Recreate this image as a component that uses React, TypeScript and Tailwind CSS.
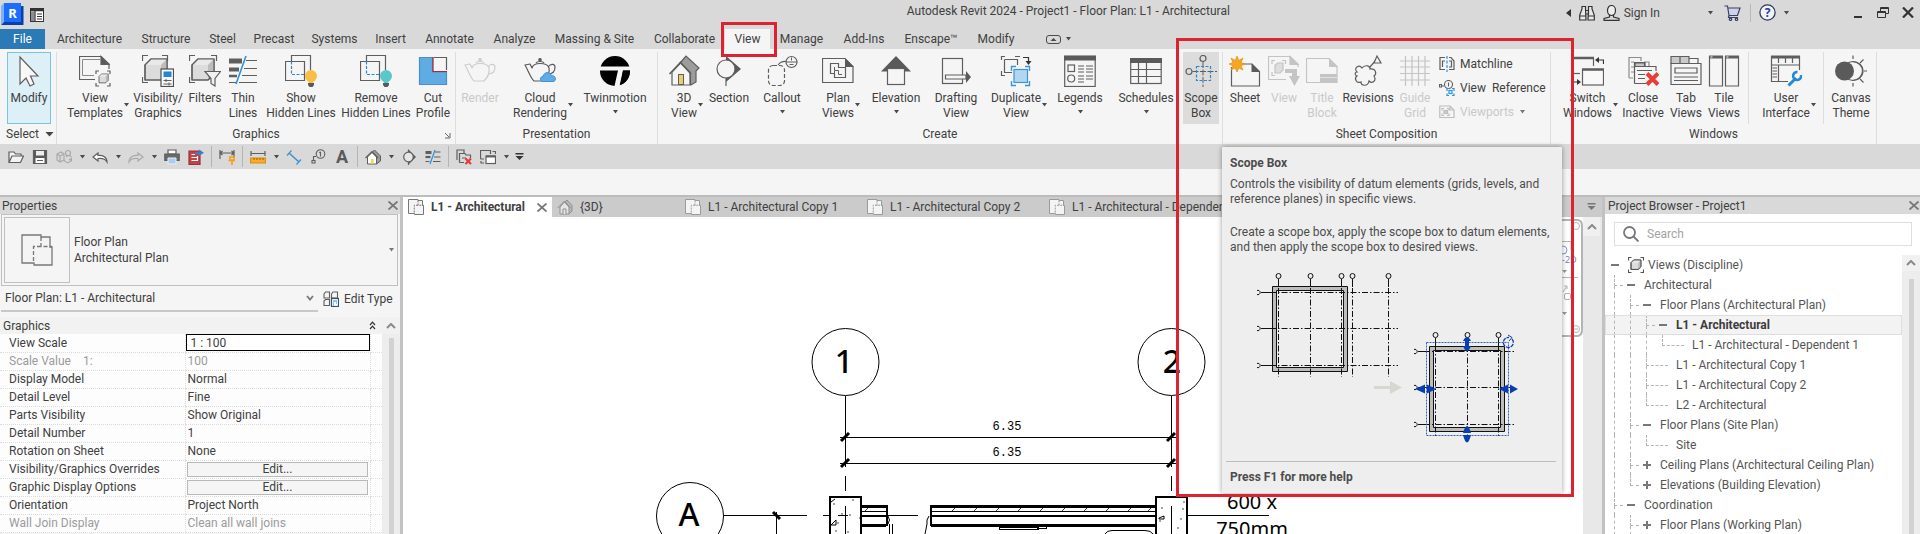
import React from 'react';

type Kids = { children: React.ReactNode };

const INK = '#5e5e5e';

function Ico({ s = 32, children }: Kids & { s?: number }) {
  return (
    <svg width={s} height={s} viewBox={`0 0 ${s} ${s}`} fill="none" stroke={INK} strokeWidth="1.2" className="shrink-0" aria-hidden="true">
      {children}
    </svg>
  );
}

/* ---------- shared fragments ---------- */

const Cube = ({ x = 0, y = 0, k = 1 }: { x?: number; y?: number; k?: number }) => (
  <g transform={`translate(${x} ${y}) scale(${k})`} strokeLinejoin="round">
    <path d="M0 6 L6 0 H22 V15 L16 21 H0 Z" fill="#dcdcdc" />
    <path d="M0 6 L6 0 H22 L16 6 Z" fill="#e9e9e9" stroke="none" />
    <path d="M22 0 V15 L16 21 V6 Z" fill="#bdbdbd" stroke="none" />
    <path d="M0 6 L6 0 H22 V15 L16 21 H0 Z" />
  </g>
);

const Bulb = ({ c }: { c: string }) => (
  <g stroke="none">
    <circle cx="26" cy="21" r="6" fill={c} />
    <path d="M23 25 H29 L28 28 H24 Z" fill={c} />
    <path d="M23 28 H29 V30 L27.500 32 H24.500 L23 30 Z" fill="#5a5a5a" />
  </g>
);

const HiddenLines = ({ c }: { c: string }) => (
  <Ico>
    <path d="M6.500 6.500 V0.500 H25.500 V15" />
    <path d="M6 6.500 H19.500 V25.500 H0.500 V6.500 H6" />
    <path d="M6.500 6.500 V19.500 H19.500" stroke="#2f86c8" strokeDasharray="3 1.500" />
    <Bulb c={c} />
  </Ico>
);

const Pot = ({ c }: { c: string }) => (
  <g stroke={c}>
    <path d="M1 10 L6 9 L8 13 C9 9 12 8.500 16 8.500 C20 8.500 24 9 25 13 C26 18 23 23 20 26 H10 C7 24 4 15 1 10 Z" strokeLinejoin="round" />
    <path d="M24 12 C27 8 31 9 31 12 C31 17 28 19 24 19" />
    <path d="M12 8 C13 6 19 6 20 8" />
    <circle cx="16" cy="4.800" r="1.200" fill={c} />
  </g>
);

/* ---------- ribbon icons ---------- */

const icons: Record<string, React.ReactNode> = {
  modify: (
    <Ico>
      <path d="M7 2 V29 L13 23 L17 31 L21 29 L17.500 21 H25 Z" fill="#f8f8f8" />
    </Ico>
  ),
  viewTemplates: (
    <Ico>
      <path d="M16 24.500 H0.500 V1.500 H22 L30 9 V14" />
      <path d="M15 20.500 H3.500 V4.500 H21" stroke="#8a8a8a" strokeWidth="1" />
      <path d="M22 1.500 L30 9.500 H22 Z" fill="#5a5a5a" />
      <path d="M17 19 V16 H20 M28 16 H31 V19 M31 28 V31 H28 M20 31 H17 V28" />
      <Cube x={20} y={19} k={0.42} />
    </Ico>
  ),
  visibility: (
    <Ico>
      <path d="M0.500 6 V0.500 H6 M20 0.500 H25.500 V6 M0.500 22 V27.500 H6" />
      <Cube x={3} y={4} />
      <rect x="19" y="14" width="12.500" height="17.500" fill="#f8f8f8" stroke="#4f4f4f" />
      <rect x="21.500" y="16.500" width="8" height="5.500" fill="#1f86d8" stroke="none" />
      <path d="M21.500 25.500 H29.500 M21.500 29 H29.500 M24 24 V27 M27 27.500 V30.500" strokeWidth="1" />
    </Ico>
  ),
  filters: (
    <Ico>
      <path d="M0.500 6 V0.500 H6 M22 0.500 H27.500 V6 M0.500 22 V27.500 H6" />
      <Cube x={3} y={4} />
      <path d="M16 16.500 H31.500 L26 23.500 V31 L22 28.500 V23.500 Z" fill="#f1f1f1" />
    </Ico>
  ),
  thinLines: (
    <Ico>
      <path d="M2 6 H15 " strokeWidth="5" />
      <path d="M2 14.500 H12" strokeWidth="4" />
      <path d="M2 21 H10" strokeWidth="2.500" />
      <path d="M2 27.500 H9 M19 5.500 H30 M17 13.500 H30 M15 20.500 H30 M12 27.500 H30" />
      <path d="M19 1 L9 29" stroke="#2f90dd" strokeWidth="1.600" />
    </Ico>
  ),
  showHidden: <HiddenLines c="#f9bf45" />,
  removeHidden: <HiddenLines c="#58c8c8" />,
  cutProfile: (
    <Ico>
      <path d="M2.500 2.500 H15.500 V17 H29.500 V29.500 H2.500 Z" fill="#5fabe3" stroke="#4a90c8" />
      <path d="M17 2.500 H29.500 V15" />
      <path d="M16 2 V16.500 H30" stroke="#b3262c" />
    </Ico>
  ),
  render: (
    <Ico>
      <Pot c="#cdcdcd" />
    </Ico>
  ),
  cloud: (
    <Ico>
      <Pot c="#5a5a5a" />
      <path d="M19 26.500 C15.500 26.500 15.500 21.500 19 21.500 C20 16.500 26 16.500 27.500 20.500 C32.500 20.500 32.500 26.500 29 26.500 Z" fill="#5fabe3" stroke="#3f93d3" strokeWidth="1" />
    </Ico>
  ),
  twinmotion: (
    <Ico>
      <circle cx="16" cy="16" r="15" fill="#000" stroke="none" />
      <path d="M0 11.500 H32 V15.500 H24 L20.500 31 H15.500 L19 15.500 H0 Z" fill="#f5f5f5" stroke="none" />
      <path d="M24 15.500 H31 C31 22 27.500 28 21.500 30 Z" fill="#000" stroke="none" />
    </Ico>
  ),
  view3d: (
    <Ico>
      <path d="M12 8 L18 1 L31 13 L28 16 V27 L23 30 Z" fill="#9c9c9c" />
      <path d="M22 17 V30 H4 V17 L12.500 8 Z" fill="#f5f5f5" />
      <path d="M1.500 19 L12.500 7.500 L23 19" strokeWidth="1.600" />
      <rect x="10.500" y="19.500" width="5" height="10" fill="#e9cf6c" strokeWidth="1" />
      <path d="M22.500 18 V30" />
    </Ico>
  ),
  section: (
    <Ico>
      <path d="M13 1 L28 14 L13 27 Z" fill="#5a5a5a" stroke="none" />
      <path d="M13 22 V31" />
      <circle cx="13" cy="14" r="9" fill="#f5f5f5" />
    </Ico>
  ),
  callout: (
    <Ico>
      <rect x="2.500" y="10.500" width="16" height="20" rx="4.500" strokeDasharray="4 2" />
      <path d="M12 10 Q15 6 20 6.500" />
      <circle cx="25.500" cy="7" r="5.500" />
      <path d="M20 7 H31 M25.500 2.500 V5.500 M23.500 9.500 H27.500" strokeWidth="1" />
    </Ico>
  ),
  plan: (
    <Ico>
      <path d="M0.500 3.500 H23 L31 11.500 V27.500 H0.500 Z" />
      <path d="M23 3 L32 12 H23 Z" fill="#5a5a5a" stroke="none" />
      <path d="M8.500 8.500 H16.500 V12.500 H23.500 V22.500 H12.500 V18.500 H8.500 Z" />
      <path d="M12.500 18.500 V15.500 M12.500 12 V15.500 H16.500 V19.500 H20" strokeWidth="1" />
    </Ico>
  ),
  elevation: (
    <Ico>
      <path d="M16 1 L31 16.500 H1 Z" fill="#5a5a5a" stroke="none" />
      <rect x="7.500" y="13.500" width="17" height="16" fill="#f5f5f5" />
    </Ico>
  ),
  drafting: (
    <Ico>
      <rect x="2.500" y="3.500" width="20" height="25" />
      <path d="M5.500 20 H26 V24 H5.500 Z" fill="#f5f5f5" />
      <path d="M26 16 L31 22 L26 28 Z" fill="#5a5a5a" stroke="none" />
    </Ico>
  ),
  duplicate: (
    <Ico>
      <path d="M1.500 5 V1.500 H5 M15 1.500 H20 M1.500 16 V20.500 H5" />
      <path d="M4.500 4.500 H17.500 V10 M12 17.500 H4.500 V4.500" />
      <path d="M23 2.500 H28.500 V7" stroke="#333" />
      <path d="M25.500 6 H31.500 L28.500 10 Z" fill="#333" stroke="none" />
      <path d="M11.500 16 V11.500 H16 M25 11.500 H29.500 V16 M29.500 26 V30.500 H25 M16 30.500 H11.500 V26" stroke="#3d94cf" strokeWidth="1.400" />
      <rect x="14" y="14.500" width="13.500" height="13" fill="#b3d6f0" stroke="#3d94cf" />
    </Ico>
  ),
  legends: (
    <Ico>
      <rect x="0.700" y="1.500" width="30.500" height="30" />
      <rect x="0" y="0.500" width="32" height="5" fill="#5a5a5a" stroke="none" />
      <rect x="4" y="10" width="6.500" height="6.500" />
      <circle cx="7.200" cy="23.500" r="3.500" />
      <path d="M14 11 H20 M22 11 H29 M14 14 H20 M22 14 H29 M14 17 H20 M22 17 H29 M14 21 H20 M22 21 H29 M14 24 H20 M22 24 H29 M14 27 H20" strokeWidth="1" />
    </Ico>
  ),
  schedules: (
    <Ico>
      <rect x="0.700" y="4" width="30.500" height="24.500" />
      <rect x="0" y="3" width="32" height="5" fill="#5a5a5a" stroke="none" />
      <path d="M0.500 14.500 H31 M0.500 21.500 H31 M8.500 8 V28 M16.500 8 V28" />
    </Ico>
  ),
  scope: (
    <Ico>
      <circle cx="18" cy="3.500" r="3" />
      <circle cx="4" cy="16.500" r="3" />
      <path d="M18 7 V32 M7.500 16.500 H32" strokeWidth="1" strokeDasharray="6 1.500" />
      <rect x="11.500" y="11.500" width="14" height="14" stroke="#2f86c8" strokeDasharray="3 1.500" />
    </Ico>
  ),
  sheet: (
    <Ico>
      <path d="M2.500 12 V31 H30.500 V16.500 L23 9 H12" />
      <path d="M22.500 8.500 L31 17 H22.500 Z" fill="#5a5a5a" stroke="none" />
      <path d="M8 1 L9.800 5.500 L14 3 L12 7.500 L16 9 L12 10.800 L14 15 L9.800 13 L8 17 L6.200 13 L2 15 L4 10.800 L0 9 L4 7.500 L2 3 L6.200 5.500 Z" fill="#f5a623" stroke="#e0930f" strokeWidth="0.700" />
    </Ico>
  ),
  placeView: (
    <Ico>
      <g stroke="#c4c4c4">
        <path d="M18 24.500 H0.500 V1.500 H22 L30 9 V12" />
        <path d="M22 1.500 L30 9.500 H22 Z" fill="#c4c4c4" />
        <path d="M4 9 V5.500 H7 M14 5.500 H17.500 V9 M4 17 V20.500 H7" />
        <path d="M7 10 L10 8 H15 V15 L12 18 H7 Z" fill="#dedede" />
        <path d="M17 14 H29 V21 H32 L26.500 31 L21 21 H24 V18 H17 Z" fill="#c4c4c4" stroke="none" />
      </g>
    </Ico>
  ),
  titleBlock: (
    <Ico>
      <g stroke="#c4c4c4">
        <path d="M0.500 3.500 H23 L31 11.500 V27.500 H0.500 Z" />
        <path d="M23 3 L32 12 H23 Z" fill="#c4c4c4" stroke="none" />
        <rect x="14" y="19" width="17" height="8.500" fill="#c4c4c4" stroke="none" />
        <path d="M14 22.500 H31" stroke="#e0e0e0" />
      </g>
    </Ico>
  ),
  revisions: (
    <Ico>
      <path d="M5 17 C1 13 7 9 10 13 C13 9 19 11 18 14 C24 13 25 19 22 21 C25 26 20 29 17 26 C16 32 9 31 9 27 C4 29 2 23 5 21 C2 20 3 17 5 17 Z" />
      <path d="M17 13 L25 4" />
      <path d="M25 1 L29 8 H22 Z" fill="#f5f5f5" />
    </Ico>
  ),
  guideGrid: (
    <Ico>
      <path d="M6.500 1 V31 M13 1 V31 M19.500 1 V31 M26 1 V31 M1 6 H31 M1 12 H31 M1 18.500 H31 M1 25 H31" stroke="#c4c4c4" />
    </Ico>
  ),
  switchWin: (
    <Ico>
      <path d="M0.500 18 V3.500 H21.500 V11" />
      <path d="M0.500 3 H22" strokeWidth="2.500" />
      <path d="M0.500 18.500 H8" />
      <rect x="10.500" y="14.500" width="21" height="15.500" fill="#f8f8f8" />
      <path d="M10 14.500 H32" strokeWidth="2.500" />
      <path d="M31.500 9 V5 H25 M1 22 V27 H6" stroke="#333" />
      <path d="M27 2 V8 L23 5 Z M5 24 V30 L9 27 Z" fill="#333" stroke="none" />
    </Ico>
  ),
  closeInactive: (
    <Ico>
      <path d="M2 23 V2.500 H14 V6 M4 7 H7 M4 12 H7 M4 17 H7 M17 7 H22 V11 M2 23 H6" stroke="#8c8c8c" />
      <path d="M7.500 28.500 V7.500 H18 V11.500 H29 V16 M7.500 28.500 H19" />
      <path d="M8 8 H17.500 V11.500 H8 Z" fill="#c4c4c4" />
      <path d="M10 15.500 H25 M11 19.500 H18 M11 23.500 H18" />
      <path d="M20 18.500 L31 29.500 M31 18.500 L20 29.500" stroke="#ea3b34" strokeWidth="4" />
    </Ico>
  ),
  tabViews: (
    <Ico>
      <path d="M1 29.500 V8.500 H31 V29.500 Z" />
      <path d="M1 1.500 H10 V8.500 H1 Z M10 1.500 H19 V8.500 H10 Z" fill="#c9c9c9" />
      <path d="M19 3.500 H28 V8.500" />
      <path d="M5 13 H27 V18 H5 Z M4 22 H28 M4 25.500 H28" />
    </Ico>
  ),
  tileViews: (
    <Ico>
      <path d="M1.500 1.500 H14.500 V31 H1.500 Z M17.500 1.500 H30.500 V31 H17.500 Z" />
      <path d="M1 2 H15 M17 2 H31" strokeWidth="3" />
      <path d="M2.500 2 H4.500 M18.500 2 H20.500" stroke="#fff" strokeWidth="1" />
    </Ico>
  ),
  userInterface: (
    <Ico>
      <path d="M18 26.500 H1.500 V1.500 H29.500 V15 M1.500 10 H29.500 M8.500 10 V26 M8.500 3 V8 M15.500 3 V8 M22.500 3 V8" />
      <path d="M1 2 H30" strokeWidth="3" />
      <path d="M2.500 13 H7 M2.500 16 H7 M2.500 19 H7 M2.500 22 H7" />
      <path d="M18.500 30.500 L26 23" stroke="#2288dc" strokeWidth="3" />
      <path d="M31 20 A4 4 0 1 1 27.500 17" stroke="#2288dc" strokeWidth="2.600" />
    </Ico>
  ),
  canvasTheme: (
    <Ico>
      <circle cx="18" cy="16" r="9.500" />
      <path d="M17 6.500 A11 9.500 0 0 1 17 25.500" />
      <circle cx="9.500" cy="16" r="9.500" fill="#5a5a5a" stroke="none" />
      <path d="M18 0.500 V4 M18 28 V31.500 M25 8 L28.500 4.500 M25 24 L28.500 27.500 M29 16 H32" />
    </Ico>
  ),
};

/* ---------- ribbon building blocks ---------- */

function Tri({ cls = 'text-[#4a4a4a]' }: { cls?: string }) {
  return (
    <svg width="7" height="4" viewBox="0 0 7 4" className={cls} fill="currentColor" aria-hidden="true">
      <path d="M1 0 H6 L3.500 3.500 Z" />
    </svg>
  );
}

type Tool = { icon: string; w: string; lines: string[]; arrow?: 'side' | 'below'; off?: boolean; cls?: string };

function ToolButton({ icon, w, lines, arrow, off, cls = '' }: Tool) {
  return (
    <button disabled={off} className={`flex shrink-0 flex-col items-center pt-[3px] ${w} ${cls} ${off ? 'text-[#c9c9c9]' : ''}`}>
      {icons[icon]}
      <span className="relative mt-1 block leading-[15px] whitespace-nowrap">
        {lines.map((l) => (
          <span key={l} className="block">{l}</span>
        ))}
        {arrow === 'side' && (
          <span className="absolute top-3 left-full"><Tri /></span>
        )}
      </span>
      {arrow === 'below' && <span className="mt-1"><Tri /></span>}
    </button>
  );
}

function Panel({ title, w, pad, tools, children, launcher }: { title: string; w: string; pad: string; tools: Tool[]; children?: React.ReactNode; launcher?: boolean }) {
  return (
    <section className={`relative flex shrink-0 flex-col border-r border-[#dedede] ${w}`}>
      <div className={`flex h-[72px] ${pad}`}>
        {tools.map((t) => <ToolButton key={t.icon} {...t} />)}
        {children}
      </div>
      <h2 className="text-center leading-5">{title}</h2>
      {launcher && (
        <button aria-label="Graphics options" className="absolute right-1 bottom-[5px]">
          <svg width="7" height="7" viewBox="0 0 7 7" stroke="#666" fill="none"><path d="M1 1 L5 5 M6 1 V6 H1" /></svg>
        </button>
      )}
    </section>
  );
}

const graphics: Tool[] = [
  { icon: 'viewTemplates', w: 'w-[66px]', lines: ['View', 'Templates'], arrow: 'side' },
  { icon: 'visibility', w: 'w-[60px]', lines: ['Visibility/', 'Graphics'] },
  { icon: 'filters', w: 'w-[34px]', lines: ['Filters'] },
  { icon: 'thinLines', w: 'w-[42px]', lines: ['Thin', 'Lines'] },
  { icon: 'showHidden', w: 'w-[74px]', lines: ['Show', 'Hidden Lines'] },
  { icon: 'removeHidden', w: 'w-[76px]', lines: ['Remove', 'Hidden Lines'] },
  { icon: 'cutProfile', w: 'w-[38px]', lines: ['Cut', 'Profile'] },
];
const presentation: Tool[] = [
  { icon: 'render', w: 'w-[48px]', lines: ['Render'], off: true },
  { icon: 'cloud', w: 'w-[72px]', lines: ['Cloud', 'Rendering'], arrow: 'side' },
  { icon: 'twinmotion', w: 'w-[78px]', lines: ['Twinmotion'], arrow: 'below' },
];
const create: Tool[] = [
  { icon: 'view3d', w: 'w-[42px]', lines: ['3D', 'View'], arrow: 'side' },
  { icon: 'section', w: 'w-[48px]', lines: ['Section'] },
  { icon: 'callout', w: 'w-[58px]', lines: ['Callout'], arrow: 'below' },
  { icon: 'plan', w: 'w-[54px]', lines: ['Plan', 'Views'], arrow: 'side' },
  { icon: 'elevation', w: 'w-[62px]', lines: ['Elevation'], arrow: 'below' },
  { icon: 'drafting', w: 'w-[58px]', lines: ['Drafting', 'View'] },
  { icon: 'duplicate', w: 'w-[62px]', lines: ['Duplicate', 'View'], arrow: 'side' },
  { icon: 'legends', w: 'w-[66px]', lines: ['Legends'], arrow: 'below' },
  { icon: 'schedules', w: 'w-[66px]', lines: ['Schedules'], arrow: 'below' },
  { icon: 'scope', w: 'w-[36px]', lines: ['Scope', 'Box'], cls: 'bg-[#dcdcdc] ml-1' },
];
const sheets: Tool[] = [
  { icon: 'sheet', w: 'w-[40px]', lines: ['Sheet'] },
  { icon: 'placeView', w: 'w-[38px]', lines: ['View'], off: true },
  { icon: 'titleBlock', w: 'w-[38px]', lines: ['Title', 'Block'], off: true },
  { icon: 'revisions', w: 'w-[54px]', lines: ['Revisions'] },
  { icon: 'guideGrid', w: 'w-[40px]', lines: ['Guide', 'Grid'], off: true },
];
const windowsTools: Tool[] = [
  { icon: 'switchWin', w: 'w-[61px]', lines: ['Switch', 'Windows'], arrow: 'side' },
  { icon: 'closeInactive', w: 'w-[50px]', lines: ['Close', 'Inactive'] },
  { icon: 'tabViews', w: 'w-[36px]', lines: ['Tab', 'Views'] },
  { icon: 'tileViews', w: 'w-[40px]', lines: ['Tile', 'Views'] },
];

const Sep = () => <span className="mx-1 w-px shrink-0 bg-[#dedede]" />;

/* ---------- title bar ---------- */

function TitleBar() {
  return (
    <header className="flex h-[29px] shrink-0 items-center">
      <div className="flex w-[571px] shrink items-center gap-[5px] pl-px">
        <svg width="24" height="24" viewBox="0 0 24 24" aria-hidden="true">
          <path d="M0 3 L3 0 V19 L0 22 Z" fill="#7fb0ff" />
          <path d="M3 0 H20 V19 H3 Z" fill="#1a6dff" />
          <path d="M20 3 H22.500 V22 H0 L3 19 H20 Z" fill="#0a3fa8" />
          <text x="11.500" y="14.500" textAnchor="middle" fontSize="13" fontWeight="700" fill="#fff" fontFamily="Noto Sans, sans-serif">R</text>
        </svg>
        <svg width="14" height="14" viewBox="0 0 14 14" fill="#fff" stroke="#333" aria-hidden="true">
          <rect x="0.500" y="0.500" width="13" height="13" />
          <path d="M0.500 2 H13.500" strokeWidth="2.500" />
          <rect x="1" y="3.500" width="3.500" height="9.500" fill="#8a8f96" stroke="none" />
          <path d="M5 3 V13 M7 6 H12 M7 8.500 H12 M7 11 H12" strokeWidth="1.200" />
        </svg>
      </div>
      <h1 className="-mt-2 min-w-0 flex-1 text-center whitespace-nowrap">Autodesk Revit 2024 - Project1 - Floor Plan: L1 - Architectural</h1>
      <div className="-mt-1 flex shrink-0 items-center">
        <button aria-label="Collapse search" className="mr-2 text-[#333]">
          <svg width="5" height="8" viewBox="0 0 5 8" fill="currentColor"><path d="M5 0 V8 L0 4 Z" /></svg>
        </button>
        <button aria-label="Find" className="mr-2">
          <svg width="16" height="16" viewBox="0 0 16 16" fill="#e8e8e8" stroke="#333" strokeWidth="1.200">
            <path d="M3 1.500 H6.500 V4 L7 15 H0.700 V10 L3 4 Z M9.500 1.500 H13 V4 L15.300 10 V15 H9 L9.500 4 Z M6.500 5.500 H9.500 V9 H6.500 M0.700 11 H7 M9 11 H15.300" />
          </svg>
        </button>
        <button className="mr-[47px] flex items-center gap-1">
          <svg width="17" height="16" viewBox="0 0 17 16" fill="none" stroke="#333" strokeWidth="1.200">
            <ellipse cx="8.500" cy="5.500" rx="4" ry="5" fill="#eee" />
            <path d="M6.500 10 V12 L1 13.500 V15.300 H16 V13.500 L10.500 12 V10" />
          </svg>
          Sign In
        </button>
        <button aria-label="Account menu" className="mr-[10px]"><Tri /></button>
        <button aria-label="App Store" className="mr-[9px]">
          <svg width="17" height="16" viewBox="0 0 17 16" fill="#cfd3ea" stroke="#3a3f63" strokeWidth="1.200">
            <path d="M0.500 1 H3.500 L5 10.500 H13.500 L16 3 H4 M5 10.500 L4.500 12.500 H14" />
            <circle cx="6.500" cy="14.300" r="1.200" /><circle cx="12.500" cy="14.300" r="1.200" />
          </svg>
        </button>
        <span className="mr-2 h-[18px] w-px bg-[#b8b8b8]" />
        <button aria-label="Help" className="mr-[7px]">
          <svg width="17" height="17" viewBox="0 0 17 17">
            <circle cx="8.500" cy="8.500" r="7.600" fill="#f1f3fa" stroke="#333a55" strokeWidth="1.300" />
            <text x="8.500" y="13" textAnchor="middle" fontSize="12" fontWeight="700" fill="#2a3ba0" fontFamily="Noto Sans, sans-serif">?</text>
          </svg>
        </button>
        <button aria-label="Help menu" className="mr-16"><Tri /></button>
        <button aria-label="Minimize" className="mr-[15px] pt-2"><span className="block h-[2px] w-2 bg-[#333]" /></button>
        <button aria-label="Restore" className="mr-[13px]">
          <svg width="12" height="11" viewBox="0 0 12 11" fill="none" stroke="#333"><path d="M3.500 4 V0.500 H11.500 V6.500 H8.500 M0.500 4.500 H8.500 V10.500 H0.500 Z M3 1.500 H12 M0 5.500 H9" /></svg>
        </button>
        <button aria-label="Close" className="mr-[6px]">
          <svg width="12" height="11" viewBox="0 0 12 11" stroke="#333" strokeWidth="2.200"><path d="M1 0.500 L11 10.500 M11 0.500 L1 10.500" /></svg>
        </button>
      </div>
    </header>
  );
}

const tabs: [string, string][] = [
  ['Architecture', 'w-[85px]'], ['Structure', 'w-[68px]'], ['Steel', 'w-[45px]'], ['Precast', 'w-[58px]'], ['Systems', 'w-[63px]'],
  ['Insert', 'w-[49px]'], ['Annotate', 'w-[69px]'], ['Analyze', 'w-[61px]'], ['Massing & Site', 'w-[99px]'], ['Collaborate', 'w-[81px]'],
  ['View', 'w-[45px]'], ['Manage', 'w-[63px]'], ['Add-Ins', 'w-[62px]'], ['Enscape™', 'w-[72px]'], ['Modify', 'w-[58px]'],
];

function TabRow() {
  return (
    <nav className="flex h-5 shrink-0 items-stretch">
      <button className="mr-[2px] w-[45px] bg-[#2a7ab5] text-white">File</button>
      {tabs.map(([t, w]) => (
        <span key={t} className={`relative flex shrink-0 ${w}`}>
          <button className={`flex-1 whitespace-nowrap ${t === 'View' ? 'bg-[#f5f5f5]' : ''}`}>{t}</button>
          {t === 'View' && <span className="pointer-events-none absolute -top-[7px] -right-[7px] -bottom-2 -left-1 z-30 border-3 border-[#dc2430]" />}
        </span>
      ))}
      <button aria-label="Ribbon display" className="ml-[21px] flex items-center gap-1">
        <svg width="15" height="9" viewBox="0 0 15 9" fill="none" stroke="#4a4a4a"><rect x="0.500" y="0.500" width="14" height="8" rx="2.500" /><path d="M4.500 6 L7.500 3 L10.500 6 Z" fill="#4a4a4a" stroke="none" /></svg>
        <Tri />
      </button>
    </nav>
  );
}

function Ribbon() {
  return (
    <div className="flex h-[95px] shrink-0 overflow-hidden bg-[#f5f5f5] pt-[3px]">
      <section className="flex w-[57px] shrink-0 flex-col border-r border-[#dedede]">
        <button className="ml-[7px] flex h-[72px] w-[44px] flex-col items-center border border-[#7cc4dc] bg-[#ddeff7] pt-[2px]">
          {icons.modify}
          <span className="mt-1 leading-[15px]">Modify</span>
        </button>
        <button className="flex items-center gap-[6px] pl-[6px] leading-5">
          Select
          <svg width="9" height="5" viewBox="0 0 9 5" fill="#444" aria-hidden="true"><path d="M0.500 0 H8.500 L4.500 4.500 Z" /></svg>
        </button>
      </section>
      <Panel title="Graphics" w="w-[399px]" pad="pl-[5px]" tools={graphics} launcher />
      <Panel title="Presentation" w="w-[202px]" pad="pl-0" tools={presentation} />
      <Panel title="Create" w="w-[565px]" pad="pl-[5px]" tools={create} />
      <Panel title="Sheet Composition" w="w-[328px]" pad="pl-[2px]" tools={sheets}>
        <div className="ml-1 flex flex-col items-start whitespace-nowrap">
          <button className="flex h-6 items-center gap-[5px]">
            <Ico s={16}>
              <path d="M6 1.500 H1 V13.500 H6 M3.500 11 V5 H6 M10 1.500 H12 L15 5 V13.500 H10 M10 5 H12.500 V11 H10" />
              <path d="M8 0 V16" stroke="#2f90dd" strokeDasharray="3 1.500" />
            </Ico>
            Matchline
          </button>
          <button className="flex h-6 items-center gap-[5px]">
            <Ico s={16}>
              <circle cx="9.500" cy="4.500" r="4" strokeWidth="1.100" />
              <path d="M9.500 2.500 V6.500 M0.500 4.500 H2.500 V7 H0.500 Z M3 6 H5" strokeWidth="1.100" />
              <path d="M8 11 V8.500 H10 M13 8.500 H15 V11 M15 13.500 V15.500 H13 M10 15.500 H8 V13.500" stroke="#2f90dd" />
              <rect x="10" y="10.500" width="3" height="3" stroke="#2f90dd" />
            </Ico>
            <span className="whitespace-pre">View  Reference</span>
          </button>
          <button disabled className="flex h-6 items-center gap-[5px] text-[#c9c9c9]">
            <Ico s={16}>
              <g stroke="#bdbdbd">
                <path d="M0.800 2 H11 L15 6 V13.500 H0.800 Z M11 2 V6 H15" />
                <path d="M3 6.500 V4.500 H5 M8 4.500 H10 V6.500 M3 9.500 V11.500 H5 M10 9.500 V11.500 H8" />
                <rect x="5" y="6.500" width="3.500" height="3" fill="#cfcfcf" />
              </g>
            </Ico>
            Viewports <Tri cls="text-[#777]" />
          </button>
        </div>
      </Panel>
      <Panel title="Windows" w="w-[326px]" pad="pl-[6px]" tools={windowsTools}>
        <Sep />
        <ToolButton icon="userInterface" w="w-[66px]" lines={['User', 'Interface']} arrow="side" />
        <Sep />
        <ToolButton icon="canvasTheme" w="w-[46px]" lines={['Canvas', 'Theme']} />
      </Panel>
    </div>
  );
}

/* ---------- quick access bar ---------- */

const qat: { id: string; w: string; art: React.ReactNode }[] = [
  { id: 'Open', w: 'w-6', art: <path d="M1 13 V3 H6 L7.500 5 H13 V7 M1 13.500 L4 7 H15.500 L12.500 13.500 Z" fill="#f3f3f3" /> },
  { id: 'Save', w: 'w-6', art: <><path d="M1.500 1.500 H14.500 V14.500 H1.500 Z" fill="#5a5a5a" /><path d="M4 2 H12 V6.500 H4 Z" fill="#eee" stroke="none" /><path d="M3.500 9 H12.500 V14 H3.500 Z" fill="#fff" stroke="none" /><path d="M5 11.500 H11" strokeWidth="1" /></> },
  { id: 'Synchronize', w: 'w-6', art: <g stroke="#a9a9a9"><path d="M1 5 L5 3 L8 5 V11 L4 13 L1 11 Z M1 5 L4 7 V13 M4 7 L8 5" /><circle cx="12" cy="4" r="2.500" /><path d="M8 11 C10 15 15 14 15.500 10 M15.500 8 C14 6 11 6.500 10 8 M13 11 L15.500 9.500 L16 12.500" /></g> },
  { id: 'Synchronize menu', w: 'w-3', art: null },
  { id: 'Undo', w: 'w-6', art: <path d="M6 4 L1 8 L6 12 V9.500 C10 9 13 9.500 15 13 C15 8 11 6 6 6.500 Z" fill="#fff" /> },
  { id: 'Undo menu', w: 'w-3', art: null },
  { id: 'Redo', w: 'w-6', art: <path d="M10 4 L15 8 L10 12 V9.500 C6 9 3 9.500 1 13 C1 8 5 6 10 6.500 Z" stroke="#ababab" /> },
  { id: 'Redo menu', w: 'w-3', art: null },
  { id: 'Print', w: 'w-6', art: <><path d="M4 1 H12 V5 H4 Z" fill="#fff" /><path d="M0.800 5 H15.200 V11.500 H0.800 Z" fill="#6a6a6a" /><path d="M4 9 H12 V15 H4 Z" fill="#a9cdec" stroke="#eee" strokeWidth="1" /></> },
  { id: 'Export PDF', w: 'w-6', art: <><path d="M1 2 H12 V15.500 H1 Z" fill="#c0424a" stroke="#9d3038" /><path d="M3.500 5.500 H7 M3.500 8.500 H9 M3.500 11.500 H9 M9.500 7 V12" stroke="#fff" /><path d="M7 3.500 H11 V0.500 L16 3.800 L11 7 V5 H7 Z" fill="#2f86c8" stroke="none" /></> },
  { id: '|1', w: 'w-[7px]', art: null },
  { id: 'Activate dimensions', w: 'w-6', art: <><path d="M1 1 V10 M15 1 V8 M1 4 H15 M3.500 2 L1 4 L3.500 6 M12.500 2 L15 4 L12.500 6" /><path d="M10 8 H16 M11 8 V11 H15 V8 M9.500 11.500 H16.500 M13 12 V16" stroke="#f0a020" strokeWidth="1.600" /></> },
  { id: '|2', w: 'w-[7px]', art: null },
  { id: 'Measure', w: 'w-6', art: <><path d="M1 2 V7 M15 2 V7 M1 4.500 H15" /><rect x="0.500" y="9" width="15" height="5" fill="#f5ad2a" stroke="#d8900c" strokeWidth="1" /><path d="M4 9 V11 M7 9 V11 M10 9 V11 M13 9 V11" stroke="#7a5200" strokeWidth="0.800" /></> },
  { id: 'Measure menu', w: 'w-3', art: null },
  { id: 'Aligned dimension', w: 'w-6', art: <><path d="M3 4 L13 13" stroke="#3f93d3" strokeWidth="1.600" /><path d="M1 6.500 L5.500 1.500 M10.500 15.500 L15 10.500" stroke="#3f93d3" /></> },
  { id: 'Tag by category', w: 'w-6', art: <><circle cx="10.500" cy="5" r="4.300" strokeWidth="1.100" /><path d="M10.500 2.800 V7.500 M9.300 3.800 L10.500 2.800 M6 7.500 H3.500 V11.500 M2 11.500 H5 V14 H2 Z" strokeWidth="1.100" /></> },
  { id: 'Text', w: 'w-6', art: 'A' },
  { id: '|3', w: 'w-[7px]', art: null },
  { id: '3D view', w: 'w-6', art: <><path d="M6.500 4 L9.500 1 L15.500 7 V12 L11.500 15 Z" fill="#9c9c9c" strokeWidth="1" /><path d="M2.500 8 V15 H11.500 V8 L7 3.500 Z" fill="#fff" strokeWidth="1" /><path d="M0.500 9 L7 2.500 L13 9" /><path d="M6 10 H8.500 V14.500 H6 Z" fill="#f0dc3c" stroke="none" /></> },
  { id: '3D view menu', w: 'w-3', art: null },
  { id: 'Section', w: 'w-6', art: <><path d="M8 1 L15 8 L8 15 Z" fill="#5a5a5a" stroke="none" /><circle cx="7.500" cy="8" r="4.800" fill="#e6e6e6" /><path d="M7.500 0.500 V3 M7.500 13 V16" /></> },
  { id: 'Thin lines', w: 'w-6', art: <><path d="M0.500 3.500 H6.500" strokeWidth="3" /><path d="M0.500 8 H5.500" strokeWidth="2.200" /><path d="M0.500 12.500 H4.500 M10 3 H15.500 M9 8 H15.500 M8 12.500 H15.500" /><path d="M10 1 L5 15" stroke="#2f90dd" /></> },
  { id: '|4', w: 'w-[7px]', art: null },
  { id: 'Close inactive', w: 'w-6', art: <><path d="M1 11 V1 H8 V4 M3.500 13.500 V4.500 H9 L10 6 H14.500 V9 M3.500 13.500 H8 M6 9 H10" /><path d="M9.500 9.500 L15 15 M15 9.500 L9.500 15" stroke="#e23b3b" strokeWidth="2.200" /></> },
  { id: 'Switch windows', w: 'w-6', art: <><path d="M0.500 10 V1.500 H10.500 V5 M0.500 10 H4" /><rect x="6" y="7" width="9.500" height="7.500" fill="#fff" /><path d="M6 7.500 H15.500" strokeWidth="2" /><path d="M12.500 2.500 H15.500 V5 M1 12 V14 H4" /></> },
  { id: 'Switch windows menu', w: 'w-3', art: null },
];

function QuickAccess() {
  return (
    <div className="flex h-[25px] shrink-0 items-center pl-1">
      {qat.map(({ id, w, art }) =>
        id[0] === '|' ? (
          <span key={id} className={`flex h-[21px] justify-center ${w}`}><span className="w-px bg-[#b4b4b4]" /></span>
        ) : (
          <button key={id} aria-label={id} className={`flex items-center justify-center ${w}`}>
            {typeof art === 'string' ? (
              <span className="text-lg leading-5 font-bold text-[#5a5a5a]">{art}</span>
            ) : art ? (
              <Ico s={16}>{art}</Ico>
            ) : (
              <Tri />
            )}
          </button>
        ),
      )}
      <button aria-label="Customize" className="ml-[3px]">
        <svg width="9" height="8" viewBox="0 0 9 8" fill="#333"><path d="M0.500 0 H8.500 V1.500 H0.500 Z M0.500 3 H8.500 L4.500 7 Z" /></svg>
      </button>
    </div>
  );
}

/* ---------- properties palette ---------- */

const CloseX = () => (
  <svg width="10" height="9" viewBox="0 0 10 9" stroke="#777" strokeWidth="1.800" aria-hidden="true"><path d="M0.500 0.500 L9.500 8.500 M9.500 0.500 L0.500 8.500" /></svg>
);

const PlanSheet = ({ s, c = '#777' }: { s: number; c?: string }) => (
  <svg width={s} height={s} viewBox="0 0 32 32" fill="#f4f4f4" stroke={c} strokeWidth={s > 20 ? 1.3 : 2} className="shrink-0" aria-hidden="true">
    <path d="M1 1 H20 V3 H29 V13 H31 V31 H13 V29 H1 Z" />
    <path d="M20 3 V12.500 H31 M20 12.500 H12.500 V29" fill="none" strokeDasharray="4 2" />
  </svg>
);

const props: { k: string; v: string; kind?: 'input' | 'edit' | 'off' }[] = [
  { k: 'View Scale', v: '1 : 100', kind: 'input' },
  { k: 'Scale Value    1:', v: '100', kind: 'off' },
  { k: 'Display Model', v: 'Normal' },
  { k: 'Detail Level', v: 'Fine' },
  { k: 'Parts Visibility', v: 'Show Original' },
  { k: 'Detail Number', v: '1' },
  { k: 'Rotation on Sheet', v: 'None' },
  { k: 'Visibility/Graphics Overrides', v: 'Edit...', kind: 'edit' },
  { k: 'Graphic Display Options', v: 'Edit...', kind: 'edit' },
  { k: 'Orientation', v: 'Project North' },
  { k: 'Wall Join Display', v: 'Clean all wall joins', kind: 'off' },
];

const Up = () => (
  <svg width="10" height="6" viewBox="0 0 10 6" fill="none" stroke="#8a8a8a" strokeWidth="2" aria-hidden="true"><path d="M1 5 L5 1 L9 5" /></svg>
);

function Properties() {
  return (
    <aside className="flex w-[403px] shrink-0 flex-col border-r-3 border-[#c2c2c2] bg-[#f5f5f5]">
      <div className="flex h-[17px] shrink-0 items-center justify-between bg-[#d9d9d9] pr-[2px] pl-[2px]">
        <h2>Properties</h2>
        <button aria-label="Close properties"><CloseX /></button>
      </div>
      <button className="mr-[2px] ml-px flex h-[72px] shrink-0 items-center border border-[#c0c0c0] text-left">
        <span className="ml-[2px] flex size-[66px] items-center justify-center border border-[#c0c0c0]"><PlanSheet s={32} /></span>
        <span className="ml-1 flex-1 leading-4">Floor Plan<br />Architectural Plan</span>
        <Tri cls="text-[#777] mr-[2px]" />
      </button>
      <div className="flex h-[31px] shrink-0 items-start">
        <label className="ml-px flex h-[26px] w-[317px] items-center border-b-2 border-[#c8c8c8] pr-1">
          <select aria-label="View" className="h-full flex-1 appearance-none bg-transparent pl-1">
            <option>Floor Plan: L1 - Architectural</option>
          </select>
          <svg width="8" height="6" viewBox="0 0 8 6" fill="none" stroke="#777" strokeWidth="1.800" aria-hidden="true"><path d="M1 1 L4 4.500 L7 1" /></svg>
        </label>
        <button className="ml-[5px] flex h-[26px] items-center gap-[5px] whitespace-nowrap">
          <Ico s={16}>
            <path d="M1 3 L2.500 1 H6.500 V7 H1 Z M8.500 3 L10 1 H14.500 V7 H8.500 Z M1 10 L2.500 8.500 H6.500 V14.500 H1 Z" strokeWidth="1.100" />
            <rect x="8.500" y="7.500" width="7" height="8" fill="#fff" stroke="#33506f" />
            <path d="M10 10 H14 M10 12 H11 M13 12 H14 M10 14 H11" stroke="#2f86c8" strokeWidth="1" />
          </Ico>
          Edit Type
        </button>
      </div>
      <div className="flex min-h-0 flex-1">
        <div className="min-w-0 flex-1">
          <div className="flex h-[17px] items-center justify-between bg-[#f2f2f2] pr-[6px] pl-[3px]">
            <h3>Graphics</h3>
            <button aria-label="Collapse group">
              <svg width="7" height="9" viewBox="0 0 7 9" fill="none" stroke="#333" strokeWidth="1.200"><path d="M1 4 L3.500 1.200 L6 4 M1 8 L3.500 5.200 L6 8" /></svg>
            </button>
          </div>
          <table className="w-full table-fixed border-collapse bg-[#fdfdfd]">
            <tbody>
              {props.map(({ k, v, kind }, i) => (
                <tr key={k} className={`h-[18px] leading-4 whitespace-pre ${kind === 'off' ? 'text-[#9b9b9b]' : ''}`}>
                  <td className="border-b border-dotted border-[#dcdcdc] p-0 pl-[9px]">
                    <label htmlFor={`prop-${i}`}>{k}</label>
                  </td>
                  <td className="w-[185px] border border-t-0 border-dotted border-[#dcdcdc] p-0">
                    {kind === 'input' ? (
                      <input id={`prop-${i}`} defaultValue={v} className="block h-[17px] w-full border border-black bg-white pl-1" />
                    ) : kind === 'edit' ? (
                      <button id={`prop-${i}`} className="mx-auto block h-[15px] w-[181px] border border-[#b9b9b9] bg-[#f5f5f5] leading-[13px]">{v}</button>
                    ) : (
                      <output id={`prop-${i}`} className="block pl-[2px]">{v}</output>
                    )}
                  </td>
                  <td className="w-3 border-b border-dotted border-[#dcdcdc] p-0" />
                </tr>
              ))}
            </tbody>
          </table>
        </div>
        <div className="flex w-[18px] flex-col items-center bg-[#ededed]">
          <button aria-label="Scroll up" className="flex h-[17px] w-full items-center justify-center bg-[#f1f1f1]"><Up /></button>
          <span className="mt-1 w-[5px] flex-1 bg-[#d2d2d2]" />
        </div>
      </div>
    </aside>
  );
}

/* ---------- drawing area ---------- */

const docTabs: { t: string; w: string; home?: boolean }[] = [
  { t: '{3D}', w: 'w-[128px]', home: true },
  { t: 'L1 - Architectural Copy 1', w: 'w-[182px]' },
  { t: 'L1 - Architectural Copy 2', w: 'w-[182px]' },
  { t: 'L1 - Architectural - Dependent 1', w: 'w-[210px]' },
];

const hatch = [952, 974, 996, 1018, 1040, 1062, 1084, 1106, 1128, 1148];
const specks = [[834, 504], [853, 500], [838, 523], [842, 514], [850, 515], [836, 531], [848, 532], [860, 518], [1162, 508], [1184, 502], [1160, 521], [1178, 528], [1183, 509], [1181, 519]];

function Slash({ x, y }: { x: number; y: number }) {
  return <path d={`M${x - 4} ${y + 4} L${x + 4} ${y - 4}`} strokeWidth="3" />;
}

function Plan() {
  return (
    <svg width="1180" height="317" viewBox="403 217 1180 317" fill="none" stroke="#000" className="shrink-0" role="img" aria-label="Floor plan drawing">
      <circle cx="845.500" cy="362" r="33.500" />
      <circle cx="1171.500" cy="362" r="33.500" />
      <circle cx="690" cy="516" r="33.500" />
      <g fill="#000" stroke="none" fontFamily="Noto Sans, sans-serif" textAnchor="middle">
        <text x="844" y="373" fontSize="32" fontWeight="500">1</text>
        <text x="1172" y="373" fontSize="32" fontWeight="500">2</text>
        <text x="689" y="526" fontSize="32" fontWeight="500">A</text>
        <text x="1252" y="509" fontSize="20">600 x</text>
        <text x="1252" y="536" fontSize="20">750mm</text>
      </g>
      <g fill="#000" stroke="none" fontFamily="Liberation Mono, monospace" fontSize="12" textAnchor="middle">
        <text x="1007" y="430">6.35</text>
        <text x="1007" y="456">6.35</text>
      </g>
      <g shapeRendering="crispEdges">
        <path d="M845.500 396 V467 M1171.500 396 V467 M845.500 476 V491 M1171.500 476 V491 M845.500 506 V534 M1171.500 506 V534" />
        <path d="M840 437.500 H1177 M840 463.500 H1177" />
        <path d="M724 515.500 H807 M823 515.500 H918 M1186 515.500 H1269 M776.500 512 V534" />
        <rect x="830" y="497" width="31" height="50" fill="#fff" strokeWidth="2" />
        <rect x="1156" y="497" width="31" height="50" fill="#fff" strokeWidth="2" />
        <path d="M845.500 506 V534 M1171.500 506 V534 M838 515.500 H848" />
        <path d="M862 506 H886 M862 525 H886 M931 506 H1155 M931 525 H1155" strokeWidth="3" />
        <path d="M862 516 H886 M931 516 H1155" strokeWidth="2" />
        <path d="M862 511.500 H886 M931 511.500 H1155" />
        <path d="M886.500 505 V526 M930.500 505 V526" strokeWidth="2" />
        <path d="M889.500 524 V534 M892.500 524 V534 M999.500 527.500 H1038 V529.500 H999.500 Z M1037 525 H1046 V528 H1037" />
      </g>
      <path d="M888 516 Q891 520 888 524 M929 516 Q926 520 927 524 L925 534 M1105 534 Q1107 530.500 1112 530.500 H1145 Q1151 530.500 1153 534" />
      {hatch.map((x) => <path key={x} d={`M${x} 511 L${x + 4} 507`} strokeWidth="0.800" />)}
      <path d="M865 511 L869 507" strokeWidth="0.800" />
      <path d="M831 502 L835 499 M832 524 L836 520 V525 H831 Z M1159 518 L1164 516 V519 H1159 Z" strokeWidth="1" />
      {specks.map(([x, y]) => <circle key={`${x}-${y}`} cx={x} cy={y} r="0.700" fill="#000" stroke="none" />)}
      <Slash x={845} y={437} /><Slash x={845} y={463} /><Slash x={1171} y={437} /><Slash x={1171} y={463} />
      <path d="M773 512 L780 519" strokeWidth="3" />
      <g stroke="#b4b4b4">
        <path d="M1555 220 H1577 Q1582 220 1582 226 V330 Q1582 336 1577 336 H1555" strokeWidth="2" />
        <path d="M1562 241.500 H1571 V250 M1562 277.500 H1578" />
        <circle cx="1576" cy="226" r="3.500" /><circle cx="1576" cy="329" r="3.500" /><path d="M1574 329 H1578" />
        <circle cx="1563" cy="250" r="4" stroke="#7f9cc0" />
        <text x="1562" y="263" fontSize="9" fill="#6a8cba" stroke="none" fontFamily="Noto Sans, sans-serif">-2D</text>
        <path d="M1563 292 L1567 286 M1564 286 H1567 V289" /><rect x="1564.500" y="293.500" width="6" height="6" rx="1.500" />
        <path d="M1562 270 H1567 L1564.500 273 Z M1562 312 H1567 L1564.500 315 Z" fill="#999" stroke="none" />
      </g>
    </svg>
  );
}

function Document() {
  return (
    <main className="flex min-w-0 flex-1 flex-col bg-white">
      <div className="flex h-5 shrink-0 items-stretch overflow-hidden bg-[#cbcbcb] whitespace-nowrap">
        <div className="flex w-[149px] shrink-0 items-center gap-[7px] bg-white pl-[5px] font-bold">
          <PlanSheet s={16} />
          <button className="flex-1 text-left font-bold">L1 - Architectural</button>
          <button aria-label="Close tab" className="mr-[5px]"><CloseX /></button>
        </div>
        {docTabs.map(({ t, w, home }) => (
          <button key={t} className={`flex shrink-0 items-center gap-[7px] pl-[5px] ${w}`}>
            {home ? (
              <svg width="16" height="16" viewBox="0 0 16 16" fill="#e4e4e4" stroke="#8f8f8f" className="shrink-0" aria-hidden="true">
                <path d="M8 3 L10 1 L15 6.500 V12 L12 15 Z" fill="#b8b8b8" />
                <path d="M3 8 V15 H12 V8 L7.500 3 Z" /><path d="M0.800 9 L7.500 2 L13.500 9" fill="none" /><path d="M6 15 V10 H9 V15" />
              </svg>
            ) : (
              <PlanSheet s={16} c="#9a9a9a" />
            )}
            {t}
          </button>
        ))}
        <span className="flex-1" />
        <button aria-label="Tab list" className="pr-[6px]">
          <svg width="9" height="8" viewBox="0 0 9 8" fill="#777"><path d="M0.500 0 H8.500 V1.500 H0.500 Z M0.500 3 H8.500 L4.500 7 Z" /></svg>
        </button>
      </div>
      <div className="flex min-h-0 flex-1">
        <div className="min-w-0 flex-1 overflow-hidden"><Plan /></div>
        <div className="w-[19px] bg-[#e8e8e8]">
          <button aria-label="Scroll up" className="flex h-[19px] w-[17px] items-center justify-center bg-[#f0f0f0]"><Up /></button>
        </div>
      </div>
    </main>
  );
}

/* ---------- project browser ---------- */

/* g holds one letter per depth: I = line passes through, T = branch, L = last branch */
const tree: { g: string; t: string; s?: '-' | '+'; sel?: boolean }[] = [
  { g: '', t: 'Views (Discipline)', s: '-' },
  { g: 'T', t: 'Architectural', s: '-' },
  { g: 'IT', t: 'Floor Plans (Architectural Plan)', s: '-' },
  { g: 'IIT', t: 'L1 - Architectural', s: '-', sel: true },
  { g: 'IIIL', t: 'L1 - Architectural - Dependent 1' },
  { g: 'IIT', t: 'L1 - Architectural Copy 1' },
  { g: 'IIT', t: 'L1 - Architectural Copy 2' },
  { g: 'IIL', t: 'L2 - Architectural' },
  { g: 'IT', t: 'Floor Plans (Site Plan)', s: '-' },
  { g: 'IIL', t: 'Site' },
  { g: 'IT', t: 'Ceiling Plans (Architectural Ceiling Plan)', s: '+' },
  { g: 'IL', t: 'Elevations (Building Elevation)', s: '+' },
  { g: 'T', t: 'Coordination', s: '-' },
  { g: 'IT', t: 'Floor Plans (Working Plan)', s: '+' },
];

function Toggle({ s }: { s: '-' | '+' }) {
  return (
    <button aria-label={s === '+' ? 'Expand' : 'Collapse'} className="flex w-[10px] shrink-0 justify-center">
      <svg width="8" height="8" viewBox="0 0 8 8" stroke="#777" strokeWidth="2"><path d={s === '+' ? 'M0 4 H8 M4 0 V8' : 'M0 4 H8'} /></svg>
    </button>
  );
}

function Guide({ c, leaf }: { c: string; leaf: boolean }) {
  if (c === 'I') return <span className="h-5 w-4 shrink-0 border-l border-dashed border-[#b5b5b5]" />;
  return (
    <span className={`flex h-5 shrink-0 flex-col ${leaf ? 'w-[22px]' : 'w-3'}`}>
      <span className={`h-[11px] border-b border-l border-dashed border-[#b5b5b5] ${leaf ? '' : 'w-[9px]'}`} />
      {c === 'T' && <span className="flex-1 border-l border-dashed border-[#b5b5b5]" />}
    </span>
  );
}

function Browser() {
  return (
    <aside className="flex w-[318px] shrink-0 flex-col border-l-3 border-[#c2c2c2] bg-white">
      <div className="flex h-[17px] shrink-0 items-center justify-between bg-[#d9d9d9] pl-[3px]">
        <h2>Project Browser - Project1</h2>
        <button aria-label="Close browser" className="pr-px"><CloseX /></button>
      </div>
      <label className="mt-2 mr-2 ml-[9px] flex h-6 shrink-0 items-center gap-2 border border-[#dedede] pl-2">
        <svg width="16" height="16" viewBox="0 0 16 16" fill="none" stroke="#777" strokeWidth="1.800" aria-hidden="true"><circle cx="6.500" cy="6.500" r="5.500" /><path d="M10.500 10.500 L15.500 15.500" /></svg>
        <input aria-label="Search" placeholder="Search" className="min-w-0 flex-1 outline-none placeholder:text-[#a3a3a3]" />
      </label>
      <div className="mt-[9px] flex min-h-0 flex-1 overflow-hidden">
        <ul className="min-w-0 flex-1 text-[#555]">
          {tree.map(({ g, t, s, sel }) => (
            <li key={t} className={`flex h-5 items-center whitespace-nowrap ${g ? 'pl-[9px]' : 'pl-[5px]'} ${sel ? 'bg-[#f3f3f3] font-bold text-[#3c3c3c] outline outline-[#dedede] -outline-offset-1' : ''}`}>
              {g.split('').map((c, i) => <Guide key={i} c={c} leaf={!s} />)}
              {s && <Toggle s={s} />}
              {g === '' && (
                <svg width="16" height="16" viewBox="0 0 32 32" fill="none" stroke="#555" strokeWidth="2.200" className="ml-2 shrink-0" aria-hidden="true">
                  <path d="M1 7 V1 H7 M25 1 H31 V7 M31 25 V31 H25 M7 31 H1 V25" />
                  <Cube x={6} y={6} k={0.9} />
                </svg>
              )}
              <span className={g ? 'ml-2' : 'ml-1'}>{t}</span>
            </li>
          ))}
        </ul>
        <div className="flex w-[18px] flex-col items-center bg-[#ededed]">
          <button aria-label="Scroll up" className="flex h-4 w-full items-center justify-center bg-[#f1f1f1]"><Up /></button>
          <span className="mt-2 w-[5px] flex-1 bg-[#d2d2d2]" />
        </div>
      </div>
    </aside>
  );
}

/* ---------- tooltip ---------- */

const HBubbles = ({ xs, y }: { xs: number[]; y: number }) => (
  <>{xs.map((x) => <path key={x} d={`M${x - 2.5} ${y} a2.500 2.500 0 1 0 5 0 a2.500 2.500 0 1 0 -5 0 M${x} ${y + 3} V${y + 11}`} />)}</>
);
const VBubbles = ({ ys, x }: { ys: number[]; x: number }) => (
  <>{ys.map((y) => <path key={y} d={`M${x - 1} ${y - 2} a2.200 2.200 0 1 1 0 4 M${x + 3} ${y} H${x + 14}`} />)}</>
);

function ScopeArt() {
  return (
    <svg width="270" height="180" viewBox="1250 268 270 180" fill="none" stroke="#111" className="ml-5" role="img" aria-label="Scope box applied to datum elements">
      <path d="M1272.500 286.500 H1347.500 V371.500 H1272.500 Z M1276.500 290.500 V367.500 H1343.500 V290.500 Z" fill="#bdbdbd" fillRule="evenodd" />
      <g strokeDasharray="6 2 1.500 2">
        <path d="M1278.500 288 V377 M1310.500 288 V377 M1341.500 288 V377 M1352.500 288 V377 M1388.500 288 V377" />
        <path d="M1270 292.500 H1398 M1270 328.500 H1398 M1270 365.500 H1398" />
      </g>
      <HBubbles xs={[1278.5, 1310.5, 1341.5, 1352.5, 1388.5]} y={276} />
      <VBubbles ys={[292.5, 328.5, 365.5]} x={1258} />
      <path d="M1374 386 H1390 V381 L1402 387.500 L1390 394 V389 H1374 Z" fill="#d6d6d2" stroke="none" />
      <path d="M1429.500 346.500 H1504.500 V431.500 H1429.500 Z M1433.500 350.500 V427.500 H1500.500 V350.500 Z" fill="#bdbdbd" fillRule="evenodd" />
      <g strokeDasharray="6 2 1.500 2">
        <path d="M1435.500 346 V437 M1467.500 346 V437 M1498.500 346 V437" />
        <path d="M1424 351.500 H1515 M1424 387.500 H1515 M1424 424.500 H1515" />
      </g>
      <HBubbles xs={[1435.5, 1467.5, 1498.5]} y={335} />
      <VBubbles ys={[351.5, 387.5, 424.5]} x={1415} />
      <rect x="1426.500" y="342.500" width="82" height="93" stroke="#2f62c8" strokeDasharray="2 1" />
      <g fill="#0a3db4" stroke="none">
        <path d="M1463 341 Q1467 333 1471 341 Z M1463 346 H1471 Q1467 356 1463 346 Z M1465 341 H1469 V346 H1465 Z" />
        <path d="M1463 433 Q1467 419 1471 433 Z M1463 435 H1471 Q1467 450 1463 435 Z" />
        <path d="M1415 389 L1425 384.500 V393.500 Z M1427 384.500 L1436 389 L1427 393.500 Z" />
        <path d="M1499 389 L1508 384.500 V393.500 Z M1510 384.500 L1518 389 L1510 393.500 Z" />
      </g>
      <path d="M1512 339 A5 5 0 1 1 1509 337.500" stroke="#0a3db4" strokeWidth="1.300" strokeDasharray="4 1" />
      <path d="M1508 335 L1512 337.500 L1509 341" stroke="#0a3db4" />
    </svg>
  );
}

function Tooltip() {
  return (
    <div role="tooltip" className="absolute top-[147px] left-[1222px] z-10 flex h-[346px] w-[340px] flex-col bg-[#eeeeee] pl-2 text-[#4c4c4c] shadow-[0_0_5px_rgba(0,0,0,0.4)]">
      <h3 className="mt-2 leading-4 font-bold">Scope Box</h3>
      <p className="mt-[6px] leading-[15px]">Controls the visibility of datum elements (grids, levels, and<br />reference planes) in specific views.</p>
      <p className="mt-[18px] leading-[15px]">Create a scope box, apply the scope box to datum elements,<br />and then apply the scope box to desired views.</p>
      <div className="mt-[13px]"><ScopeArt /></div>
      <p className="mt-auto -ml-1 mr-[6px] border-t border-[#bdbdbd] pt-[7px] pb-2 pl-1 leading-4 font-bold">Press F1 for more help</p>
    </div>
  );
}

export default function App() {
  return (
    <div className="relative flex h-screen flex-col overflow-hidden bg-[#d9d9d9] font-[Roboto,'Noto_Sans',sans-serif] text-xs text-[#404040]">
      <TitleBar />
      <TabRow />
      <Ribbon />
      <QuickAccess />
      <div className="h-[26px] shrink-0 bg-[#f5f5f5]" />
      <div className="flex min-h-0 flex-1 border-t-2 border-[#bcbcbc]">
        <Properties />
        <Document />
        <Browser />
      </div>
      <Tooltip />
      <div className="pointer-events-none absolute top-[38px] left-[1176px] z-20 h-[459px] w-[398px] border-3 border-[#dc2430]" />
    </div>
  );
}
